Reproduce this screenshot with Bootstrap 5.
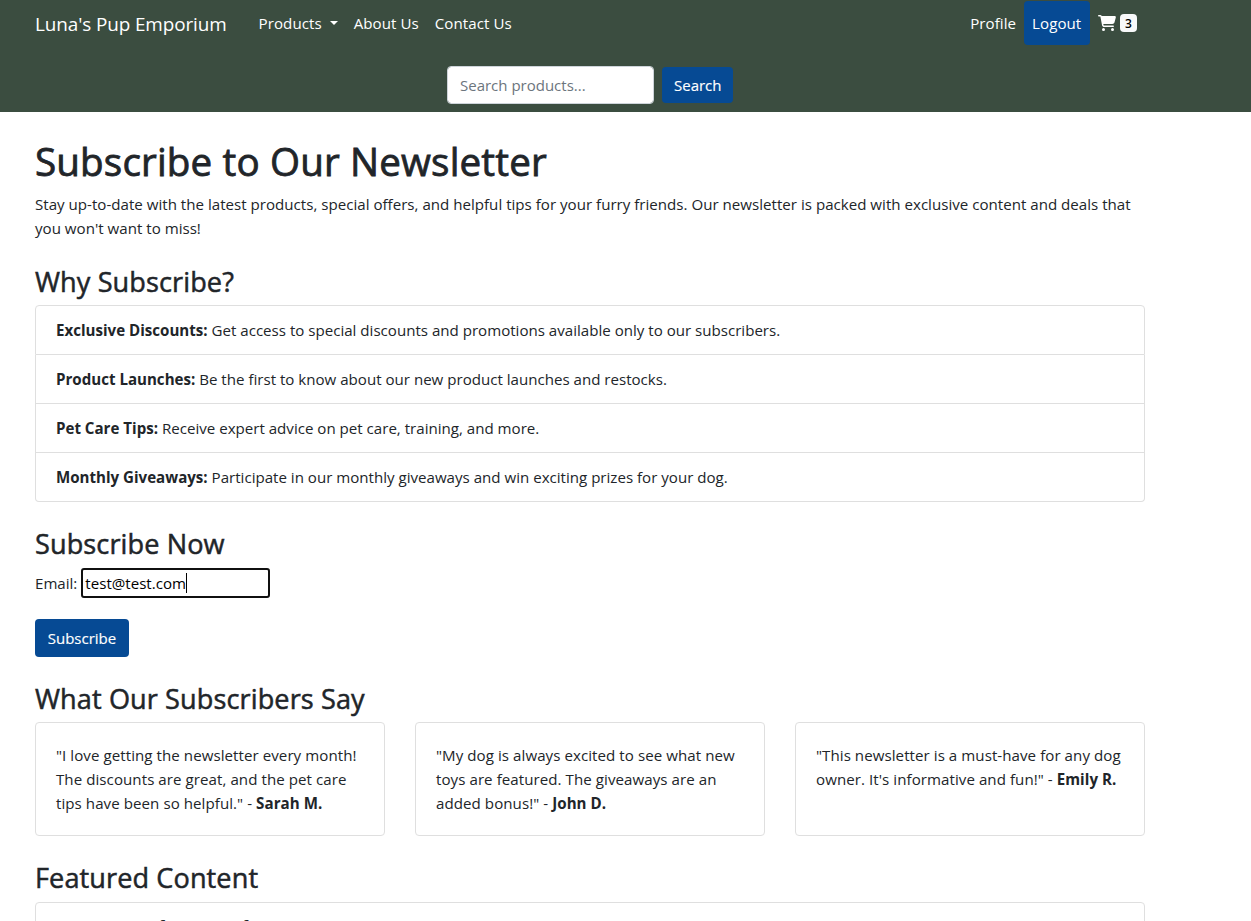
<!DOCTYPE html>
<html lang="en">
<head>
<meta charset="utf-8">
<title>Luna's Pup Emporium</title>
<link href="https://cdn.jsdelivr.net/npm/bootstrap@5.3.0/dist/css/bootstrap.min.css" rel="stylesheet">
<style>
  body { font-family: "Open Sans", "Noto Sans", sans-serif; font-size: 15.1px; line-height: 24px; overflow: hidden; color: #212529; }
  .site-nav { background: #3b4d40; height: 112px; padding: 1px 106px 8px 35px; }
  .site-nav .nav-link { color: #fff; padding: 10px 8px; line-height: 24px; letter-spacing: .06px; white-space: nowrap; }
  .site-nav .navbar-brand { color: #fff; font-size: 18.9px; line-height: 30px; margin: 2px 24px 0 0; padding: 0; letter-spacing: -.1px; }
  .site-nav .dropdown-toggle::after { margin-left: 8px; }
  .btn-royal { background: #064a94; color: #fff; border-radius: 4px; font-size: 15px; line-height: 24px; padding: 6px 12px; border: 0; -webkit-text-stroke: .15px; }
  .subscribe-btn { margin: 21px 0 25px; height: 38px; width: 94px; display: block; }
  .search-btn { height: 36px; width: 71px; }
  .site-nav .logout-link { background: #064a94; border-radius: 4px; width: 66px; }
  .search-box { width: 207px; height: 38px; font-size: 15px; border-radius: 4px; border-color: #ced4da; }
  .search-box::placeholder { color: #6c757d; }
  .count-pill { font-size: 12px; line-height: 13px; padding: 3px 5px; height: 18px; border-radius: 4px; margin-left: 4px; font-weight: 600; }
  main { width: 1110px; margin-left: 35px; padding-top: 25px; }
  h1 { font-size: 38.6px; line-height: 48px; font-weight: 400; margin-bottom: 7px; letter-spacing: .15px; -webkit-text-stroke: .8px; }
  h2 { font-size: 27.1px; line-height: 34px; font-weight: 400; margin-bottom: 6px; padding-top: 1px; letter-spacing: .1px; -webkit-text-stroke: .5px; }
  .intro { letter-spacing: .01px; }
  .list-group, .card { --bs-border-radius: 4px; --bs-list-group-border-radius: 4px; --bs-card-border-radius: 4px; --bs-card-border-color: #dfdfdf; --bs-list-group-border-color: #dfdfdf; }
  .list-group-item { padding: 12px 20px; }
  .card-body { padding: 20px 18px 20px 20px; letter-spacing: .06px; }
  .email-field { width: 189px; height: 30px; border: 2px solid #101010; border-radius: 3px; margin-left: 4px; padding: 0 2px; color: #000; }
  .email-row { margin-top: 7px; }
  .caret { width: 1px; height: 20px; background: #000; }
  .quotes { display: grid; grid-template-columns: repeat(3, 1fr); gap: 30px; margin-bottom: 24px; }
  .say-title { margin-top: -1px; }
  .feature-heading { margin-bottom: 7px; }
  .feature-title { font-size: 18.5px; line-height: 24px; font-weight: 500; margin-top: -8px; }
</style>
</head>
<body>
<nav class="site-nav d-flex flex-column">
  <div class="d-flex align-items-center">
    <a class="navbar-brand" href="#">Luna's Pup Emporium</a>
    <a class="nav-link dropdown-toggle" href="#">Products</a>
    <a class="nav-link" href="#">About Us</a>
    <a class="nav-link" href="#">Contact Us</a>
    <a class="nav-link ms-auto" href="#">Profile</a>
    <a class="nav-link logout-link" href="#">Logout</a>
    <a class="nav-link d-flex align-items-center" href="#"><svg width="18" height="16" viewBox="0 0 576 512" fill="#fff"><path d="M0 24C0 10.700 10.700 0 24 0H69.500c22 0 41.500 12.800 50.600 32h411c26.300 0 45.500 25 38.600 50.400l-41 152.300c-8.500 31.400-37 53.300-69.500 53.300H170.700l5.400 28.500c2.200 11.300 12.100 19.500 23.600 19.500H488c13.300 0 24 10.700 24 24s-10.700 24-24 24H199.700c-34.600 0-64.300-24.600-70.700-58.500L77.400 54.500c-.7-3.800-4-6.500-7.900-6.500H24C10.700 48 0 37.300 0 24zM128 464a48 48 0 1 1 96 0 48 48 0 1 1-96 0zm336-48a48 48 0 1 1 0 96 48 48 0 1 1 0-96z"/></svg><span class="badge text-bg-light count-pill">3</span></a>
  </div>
  <form class="d-flex align-items-center justify-content-center mt-auto gap-2">
    <input class="form-control search-box" placeholder="Search products...">
    <button class="btn btn-royal search-btn" type="button">Search</button>
  </form>
</nav>
<main>
  <h1>Subscribe to Our Newsletter</h1>
  <p class="intro mb-4">Stay up-to-date with the latest products, special offers, and helpful tips for your furry friends. Our newsletter is packed with exclusive content and deals that you won't want to miss!</p>
  <h2>Why Subscribe?</h2>
  <ul class="list-group mb-4">
    <li class="list-group-item"><strong>Exclusive Discounts:</strong> Get access to special discounts and promotions available only to our subscribers.</li>
    <li class="list-group-item"><strong>Product Launches:</strong> Be the first to know about our new product launches and restocks.</li>
    <li class="list-group-item"><strong>Pet Care Tips:</strong> Receive expert advice on pet care, training, and more.</li>
    <li class="list-group-item"><strong>Monthly Giveaways:</strong> Participate in our monthly giveaways and win exciting prizes for your dog.</li>
  </ul>
  <h2>Subscribe Now</h2>
  <div class="email-row d-flex align-items-center">Email: <div class="email-field d-flex align-items-center">test@test.com<span class="caret"></span></div></div>
  <button class="btn btn-royal subscribe-btn" type="button">Subscribe</button>
  <h2 class="say-title">What Our Subscribers Say</h2>
  <div class="quotes">
    <div class="card"><div class="card-body">"I love getting the newsletter every month! The discounts are great, and the pet care tips have been so helpful." - <strong>Sarah M.</strong></div></div>
    <div class="card"><div class="card-body">"My dog is always excited to see what new toys are featured. The giveaways are an added bonus!" - <strong>John D.</strong></div></div>
    <div class="card"><div class="card-body">"This newsletter is a must-have for any dog owner. It's informative and fun!" - <strong>Emily R.</strong></div></div>
  </div>
  <h2 class="feature-heading">Featured Content</h2>
  <div class="card"><div class="card-body"><div class="feature-title">Best Treats for Using for</div></div></div>
</main>
<script src="https://cdn.jsdelivr.net/npm/bootstrap@5.3.0/dist/js/bootstrap.bundle.min.js"></script>
</body>
</html>
